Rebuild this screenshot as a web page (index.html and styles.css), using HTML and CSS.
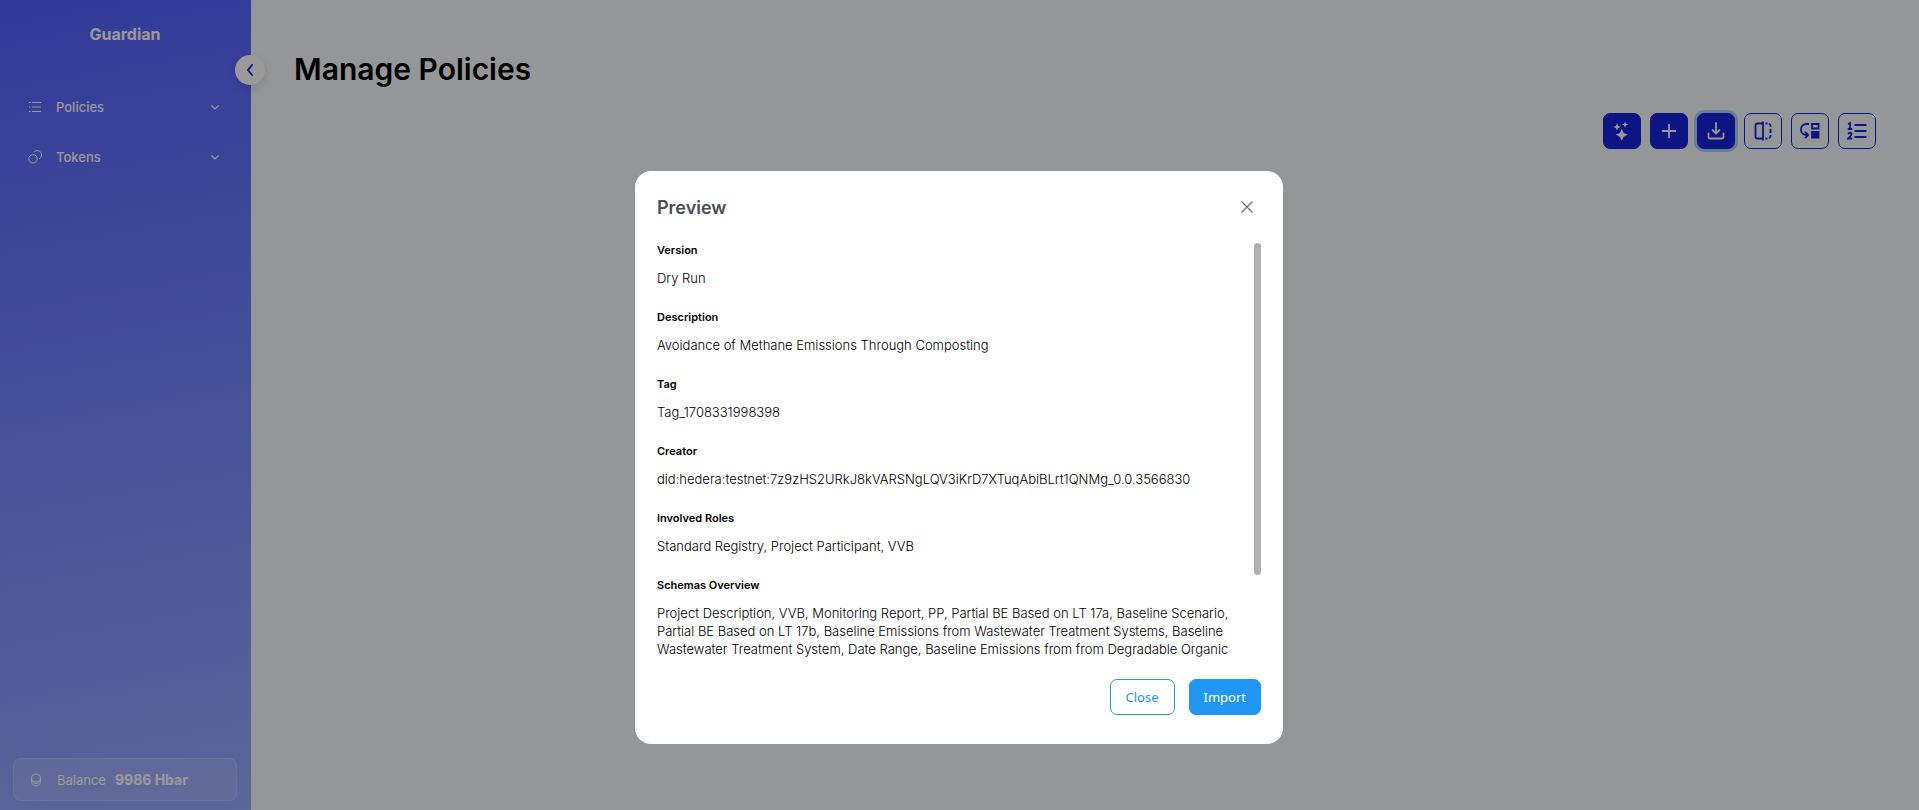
FILE: index.html
```html
<!DOCTYPE html>
<html lang="en">
<head>
<meta charset="utf-8">
<title>Guardian - Manage Policies</title>
<meta name="viewport" content="width=device-width, initial-scale=1">
<link rel="stylesheet" href="styles.css">
</head>
<body>
<div class="app">
  <aside class="sidebar">
    <div class="brand">Guardian</div>
    <button class="collapse" type="button" aria-label="Collapse menu">
      <svg width="8" height="14" viewBox="0 0 8 14" fill="none" stroke="currentColor" stroke-width="2" stroke-linecap="round" stroke-linejoin="round"><path d="M6 2L2 7l4 5"/></svg>
    </button>
    <nav class="nav">
      <button class="nav-item" type="button">
        <svg class="nav-icon" viewBox="0 0 14 14" fill="none" stroke="currentColor"><path d="M4 2.500h9M4 7h9M4 11.500h9M1 2.500h1.500M1 7h1.500M1 11.500h1.500"/></svg>
        <span class="nav-label">Policies</span>
        <svg class="chevron" viewBox="0 0 8 5" fill="none" stroke="currentColor" stroke-width="1.200" stroke-linecap="round"><path d="M.7.8L4 4 7.300.8"/></svg>
      </button>
      <button class="nav-item" type="button">
        <svg class="nav-icon" viewBox="0 0 14 14" fill="none" stroke="currentColor"><circle cx="5" cy="8.800" r="4.200"/><path d="M6 2.200a4.300 4.300 0 1 1 5.200 6.600"/></svg>
        <span class="nav-label">Tokens</span>
        <svg class="chevron" viewBox="0 0 8 5" fill="none" stroke="currentColor" stroke-width="1.200" stroke-linecap="round"><path d="M.7.8L4 4 7.300.8"/></svg>
      </button>
    </nav>
    <div class="balance">
      <svg class="balance-icon" viewBox="0 0 12 14" fill="none" stroke="currentColor"><ellipse cx="6" cy="5" rx="4.500" ry="4"/><path d="M1.500 5v3.500c0 2.500 2 4.500 4.500 4.500s4.500-2 4.500-4.500V5M1.500 7c.5 2 2.200 3.500 4.500 3.500S10 9 10.500 7"/></svg>
      <span class="balance-label">Balance</span>
      <strong class="balance-value">9986 Hbar</strong>
    </div>
  </aside>
  <main class="content">
    <h1 class="title">Manage Policies</h1>
    <div class="toolbar">
      <button class="tool solid" type="button" aria-label="Suggest policy">
        <svg class="tool-icon" viewBox="0 0 20 20" fill="currentColor"><path d="M9.800 7.800l1.900 4.100 4.100 1.900-4.100 1.900-1.900 4.100-1.900-4.100-4.100-1.900 4.100-1.900zM5 2.300l1.100 2.600L8.700 6 6.100 7.100 5 9.700 3.900 7.100 1.300 6l2.600-1.100zM13 .5l.9 2.200 2.200.9-2.200.9-.9 2.200-.9-2.200-2.200-.9 2.200-.9z"/></svg>
      </button>
      <button class="tool solid" type="button" aria-label="Create policy">
        <svg class="tool-icon" viewBox="0 0 20 20" fill="none" stroke="currentColor" stroke-width="1.800" stroke-linecap="round"><path d="M10 3.600v12.800M3.600 10h12.800"/></svg>
      </button>
      <button class="tool solid focused" type="button" aria-label="Import policy">
        <svg class="tool-icon" viewBox="0 0 20 20" fill="none" stroke="currentColor" stroke-width="1.800" stroke-linecap="round" stroke-linejoin="round"><path d="M10 2v10.500M6.500 9l3.500 3.500L13.500 9M2.500 12.500v3.200q0 1.800 1.800 1.800h11.400q1.800 0 1.800-1.800v-3.200"/></svg>
      </button>
      <button class="tool" type="button" aria-label="Compare policies">
        <svg class="tool-icon" viewBox="0 0 20 20" fill="none" stroke="currentColor" stroke-width="1.800"><path d="M10 .5v19M10 2.500H4.500q-2 0-2 2v11q0 2 2 2H10M12.500 2.500h2M16 2.800q1.500.5 1.500 2v1M17.500 8v4M17.500 14v1q0 1.500-1.500 2.200M12.500 17.500h2"/></svg>
      </button>
      <button class="tool" type="button" aria-label="Migrate data">
        <svg class="tool-icon" viewBox="0 0 20 20" fill="none" stroke="currentColor" stroke-width="1.800"><path d="M9 3H6.500C3 3 1 5.500 1 8.500S3 14 6.500 14h1M5 10.800L8.200 14 5 17.200M12 3h6.500v4.500H12z"/><path d="M11.100 10h8.300v7.500h-8.300z" fill="currentColor" stroke="none"/></svg>
      </button>
      <button class="tool" type="button" aria-label="Policy list">
        <svg class="tool-icon" viewBox="0 0 20 20" fill="none" stroke="currentColor" stroke-width="1.800"><path d="M7.500 4h12M7.500 10h12M7.500 16h12M1 2.800l2-.8v6M.8 8h4.400M1 12.800q2-1.800 3.500-.3.500 1.500-3.300 5h4"/></svg>
      </button>
    </div>
  </main>
</div>

<div class="overlay">
  <section class="dialog" role="dialog" aria-modal="true" aria-labelledby="dialog-title">
    <header class="dialog-header">
      <h2 class="dialog-title" id="dialog-title">Preview</h2>
      <button class="dialog-x" type="button" aria-label="Close dialog">
        <svg width="12" height="12" viewBox="0 0 12 12" fill="none" stroke="currentColor" stroke-width="1.300"><path d="M.5.5l11 11M11.500.5l-11 11"/></svg>
      </button>
    </header>
    <div class="dialog-body">
      <dl class="details">
        <div class="field"><dt>Version</dt><dd>Dry Run</dd></div>
        <div class="field"><dt>Description</dt><dd>Avoidance of Methane Emissions Through Composting</dd></div>
        <div class="field"><dt>Tag</dt><dd>Tag_1708331998398</dd></div>
        <div class="field"><dt>Creator</dt><dd>did:hedera:testnet:7z9zHS2URkJ8kVARSNgLQV3iKrD7XTuqAbiBLrt1QNMg_0.0.3566830</dd></div>
        <div class="field"><dt>Involved Roles</dt><dd>Standard Registry, Project Participant, VVB</dd></div>
        <div class="field"><dt>Schemas Overview</dt><dd>Project Description, VVB, Monitoring Report, PP, Partial BE Based on LT 17a, Baseline Scenario, Partial BE Based on LT 17b, Baseline Emissions from Wastewater Treatment Systems, Baseline Wastewater Treatment System, Date Range, Baseline Emissions from from Degradable Organic</dd></div>
      </dl>
      <div class="scrollbar"><div class="thumb"></div></div>
    </div>
    <footer class="dialog-footer">
      <button class="btn outline" type="button">Close</button>
      <button class="btn primary" type="button">Import</button>
    </footer>
  </section>
</div>
</body>
</html>
```

FILE: styles.css
```css
* { box-sizing: border-box; }

body {
  margin: 0;
  background: #f9fafc;
  font-family: Inter, "Liberation Sans", sans-serif;
  font-size: 13px;
  color: #000;
}

button { font: inherit; cursor: pointer; }

.app {
  display: flex;
  min-height: 100vh;
}

/* Sidebar */
.sidebar {
  position: relative;
  display: flex;
  flex-direction: column;
  flex: 0 0 251px;
  padding: 24px 14px 9px 13px;
  background: linear-gradient(170deg, #5461ff 0%, #99aaff 100%);
  color: #fff;
}

.brand {
  font-size: 16px;
  font-weight: 700;
  line-height: 20px;
  text-align: center;
}

.collapse {
  position: absolute;
  top: 55px;
  right: -14px;
  display: grid;
  place-items: center;
  width: 30px;
  height: 30px;
  padding: 0;
  border: 0;
  border-radius: 50%;
  background: #fff;
  color: #1722dc;
  box-shadow: 0 4px 10px rgba(0, 0, 0, 0.12);
}

.nav {
  display: flex;
  flex-direction: column;
  margin-top: 38px;
}

.nav-item {
  display: flex;
  align-items: center;
  height: 50px;
  padding: 0 18px 0 15px;
  border: 0;
  background: none;
  color: inherit;
  font-weight: 500;
  text-align: left;
}

.nav-icon {
  width: 14px;
  height: 14px;
  margin-right: 14px;
}

.nav-label { flex: 1; }

.chevron {
  width: 8px;
  height: 5px;
}

.balance {
  display: flex;
  align-items: center;
  height: 43px;
  margin-top: auto;
  padding: 0 16px;
  border: 1px solid rgba(255, 255, 255, 0.15);
  border-radius: 8px;
  background: rgba(255, 255, 255, 0.12);
}

.balance-icon {
  width: 12px;
  height: 14px;
  margin-right: 15px;
}

.balance-label { margin-right: 9px; }

.balance-value {
  font-size: 14px;
  font-weight: 700;
}

/* Page */
.content {
  flex: 1;
  padding: 48px 43px 0;
}

.title {
  margin: 0 0 23px;
  font-size: 30px;
  font-weight: 600;
  line-height: 42px;
}

.toolbar {
  display: flex;
  justify-content: flex-end;
  gap: 9px;
}

.tool {
  display: grid;
  place-items: center;
  width: 38px;
  height: 36px;
  padding: 0;
  border: 1px solid #1722dc;
  border-radius: 7px;
  background: transparent;
  color: #1722dc;
}

.tool.solid {
  background: #1722dc;
  color: #fff;
}

.tool.focused { box-shadow: 0 0 0 3px #a6d5fa; }

.tool-icon {
  width: 20px;
  height: 20px;
}

/* Dialog */
.overlay {
  position: fixed;
  inset: 0;
  display: flex;
  align-items: center;
  justify-content: center;
  padding: 105px 1px 0 0;
  background: rgba(0, 0, 0, 0.4);
}

.dialog {
  display: flex;
  flex-direction: column;
  width: 648px;
  max-width: 90vw;
  padding: 22px 22px 29px;
  border-radius: 16px;
  background: #fff;
}

.dialog-header {
  display: flex;
  align-items: center;
  justify-content: space-between;
  height: 28px;
  margin-bottom: 22px;
}

.dialog-title {
  margin: 0;
  font-size: 18px;
  font-weight: 600;
  color: #495057;
}

.dialog-x {
  display: grid;
  place-items: center;
  width: 28px;
  height: 28px;
  padding: 0;
  border: 0;
  background: none;
  color: #6c757d;
}

.dialog-body {
  display: flex;
  gap: 18px;
  margin-bottom: 21px;
}

.details {
  display: flex;
  flex: 1;
  flex-direction: column;
  gap: 23px;
  min-width: 0;
  margin: 0;
}

.field {
  display: flex;
  flex-direction: column;
  gap: 11px;
}

.field dt {
  font-size: 11px;
  font-weight: 600;
  line-height: 15px;
}

.field dd {
  margin: 0;
  font-size: 13px;
  font-weight: 300;
  line-height: 18px;
}

.scrollbar { width: 7px; }

.thumb {
  height: 80%;
  border-radius: 4px;
  background: #b0b0b0;
}

.dialog-footer {
  display: flex;
  justify-content: flex-end;
  gap: 14px;
}

.btn {
  min-width: 65px;
  height: 36px;
  padding: 0 14px;
  border: 1px solid #2196f3;
  border-radius: 7px;
  font-family: "Noto Sans", sans-serif;
  font-size: 13px;
}

.btn.outline {
  background: #fff;
  color: #2196f3;
}

.btn.primary {
  background: #2196f3;
  color: #fff;
}
```
